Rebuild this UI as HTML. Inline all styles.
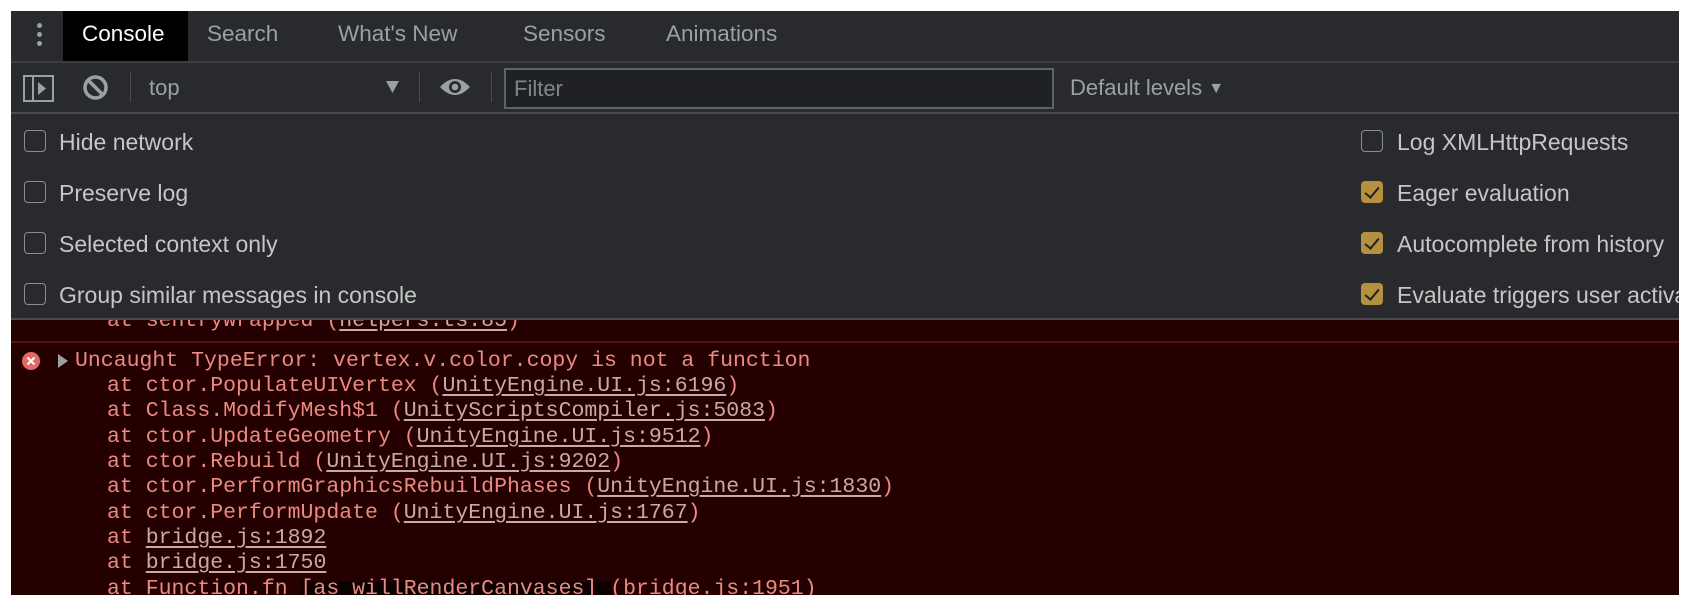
<!DOCTYPE html>
<html><head><meta charset="utf-8"><style>
*{margin:0;padding:0;box-sizing:border-box}
html,body{width:1690px;height:606px;background:#fff;overflow:hidden}
body{position:relative;font-family:"Liberation Sans",Arial,sans-serif}
#p{position:absolute;left:11px;top:11px;width:1668px;height:584px;background:#292a2d;overflow:hidden}
.a{position:absolute;white-space:nowrap}
.tab{position:absolute;top:0;height:50px;line-height:46px;font-size:22.5px;color:#9aa0a6}
.cb{position:absolute;width:22px;height:22px;border:1.5px solid #8a8d91;border-radius:4px}
.cb.on{background:#b5913f;border-color:#b5913f}
.cb.on:after{content:"";position:absolute;left:6px;top:2px;width:6px;height:12px;border:solid #222;border-width:0 2.5px 2.5px 0;transform:rotate(40deg)}
.lbl{position:absolute;font-size:23px;color:#c4c7c5;line-height:24px;white-space:nowrap}
#log{position:absolute;left:0;top:309px;width:1668px;height:275px;background:#250000;font-family:"Liberation Mono",monospace;font-size:21.5px;color:#ec8a82;line-height:25.3px;overflow:hidden}
#log .l{position:absolute;white-space:pre}
#log u{color:#c9a9a6;text-decoration:underline;text-underline-offset:3px}
</style></head><body>
<div id="p">
 <div class="a" style="left:0;top:0;width:1668px;height:52px;background:#292a2d;border-bottom:2px solid #3c3d40"></div>
 <div class="a" style="left:26px;top:12px;width:5px;height:5px;border-radius:50%;background:#9aa0a6"></div>
 <div class="a" style="left:26px;top:21px;width:5px;height:5px;border-radius:50%;background:#9aa0a6"></div>
 <div class="a" style="left:26px;top:30px;width:5px;height:5px;border-radius:50%;background:#9aa0a6"></div>
 <div class="tab" style="left:52px;width:125px;background:#000;color:#fff;padding-left:19px">Console</div>
 <div class="tab" style="left:196px">Search</div>
 <div class="tab" style="left:327px">What's New</div>
 <div class="tab" style="left:512px">Sensors</div>
 <div class="tab" style="left:655px">Animations</div>
 <div class="a" style="left:0;top:101px;width:1668px;height:2px;background:#4a4b4e"></div>
 <svg class="a" style="left:12px;top:64px" width="31" height="27" viewBox="0 0 31 27"><rect x="1" y="1" width="29" height="25" fill="none" stroke="#9aa0a6" stroke-width="2"/><line x1="10" y1="1" x2="10" y2="26" stroke="#9aa0a6" stroke-width="2"/><path d="M15 7 L23 13.5 L15 20Z" fill="#9aa0a6"/></svg>
 <svg class="a" style="left:71px;top:63px" width="27" height="27" viewBox="0 0 27 27"><circle cx="13.5" cy="13.5" r="10.5" fill="none" stroke="#9aa0a6" stroke-width="3.5"/><line x1="6" y1="6" x2="21" y2="21" stroke="#9aa0a6" stroke-width="3.5"/></svg>
 <div class="a" style="left:119px;top:61px;width:1px;height:30px;background:#4a4b4e"></div>
 <div class="a" style="left:138px;top:62px;font-size:22px;color:#9aa0a6;line-height:30px">top</div>
 <svg class="a" style="left:375px;top:70px" width="13" height="12"><path d="M0 0H13L6.5 12Z" fill="#9aa0a6"/></svg>
 <div class="a" style="left:408px;top:61px;width:1px;height:30px;background:#4a4b4e"></div>
 <svg class="a" style="left:428px;top:66px" width="32" height="20" viewBox="0 0 32 20"><path d="M1 10 Q16 -6 31 10 Q16 26 1 10Z" fill="#9aa0a6"/><circle cx="16" cy="10" r="6" fill="#292a2d"/><circle cx="16" cy="10" r="3.3" fill="#9aa0a6"/></svg>
 <div class="a" style="left:480px;top:61px;width:1px;height:30px;background:#4a4b4e"></div>
 <div class="a" style="left:493px;top:57px;width:550px;height:41px;background:#202124;border:2px solid #5f6368"></div>
 <div class="a" style="left:503px;top:63px;font-size:22px;color:#80868b;line-height:30px">Filter</div>
 <div class="a" style="left:1059px;top:62px;font-size:22px;color:#9aa0a6;line-height:30px">Default levels <span style="font-size:16px;position:relative;top:-2px">▼</span></div>
 <div class="cb" style="left:13px;top:119px"></div><div class="lbl" style="left:48px;top:119px">Hide network</div>
 <div class="cb" style="left:13px;top:170px"></div><div class="lbl" style="left:48px;top:170px">Preserve log</div>
 <div class="cb" style="left:13px;top:221px"></div><div class="lbl" style="left:48px;top:221px">Selected context only</div>
 <div class="cb" style="left:13px;top:272px"></div><div class="lbl" style="left:48px;top:272px">Group similar messages in console</div>
 <div class="cb" style="left:1350px;top:119px"></div><div class="lbl" style="left:1386px;top:119px">Log XMLHttpRequests</div>
 <div class="cb on" style="left:1350px;top:170px"></div><div class="lbl" style="left:1386px;top:170px">Eager evaluation</div>
 <div class="cb on" style="left:1350px;top:221px"></div><div class="lbl" style="left:1386px;top:221px">Autocomplete from history</div>
 <div class="cb on" style="left:1350px;top:272px"></div><div class="lbl" style="left:1386px;top:272px">Evaluate triggers user activation</div>
 <div class="a" style="left:0;top:307px;width:1668px;height:2px;background:#4a4b4e"></div>
 <div id="log">
  <div class="l" style="left:96px;top:-11px">at sentryWrapped (<u>helpers.ts:85</u>)</div>
  <div class="a" style="left:0;top:21px;width:1668px;height:2px;background:#5a0f0f"></div>
  <svg class="a" style="left:11px;top:32px" width="18" height="18"><circle cx="9" cy="9" r="9" fill="#e46962"/><path d="M5.5 5.5L12.5 12.5M12.5 5.5L5.5 12.5" stroke="#fff" stroke-width="2"/></svg>
  <svg class="a" style="left:47px;top:34px" width="10" height="14"><path d="M0 0L10 7L0 14Z" fill="#9aa0a6"/></svg>
  <div class="l" style="left:64px;top:29px">Uncaught TypeError: vertex.v.color.copy is not a function</div>
  <div class="l" style="left:96px;top:54px">at ctor.PopulateUIVertex (<u>UnityEngine.UI.js:6196</u>)</div>
  <div class="l" style="left:96px;top:79px">at Class.ModifyMesh$1 (<u>UnityScriptsCompiler.js:5083</u>)</div>
  <div class="l" style="left:96px;top:105px">at ctor.UpdateGeometry (<u>UnityEngine.UI.js:9512</u>)</div>
  <div class="l" style="left:96px;top:130px">at ctor.Rebuild (<u>UnityEngine.UI.js:9202</u>)</div>
  <div class="l" style="left:96px;top:155px">at ctor.PerformGraphicsRebuildPhases (<u>UnityEngine.UI.js:1830</u>)</div>
  <div class="l" style="left:96px;top:181px">at ctor.PerformUpdate (<u>UnityEngine.UI.js:1767</u>)</div>
  <div class="l" style="left:96px;top:206px">at <u>bridge.js:1892</u></div>
  <div class="l" style="left:96px;top:231px">at <u>bridge.js:1750</u></div>
  <div class="a" style="left:290px;top:262px;width:310px;height:20px;background:#0d0000"></div>
  <div class="l" style="left:96px;top:257px">at Function.fn [as willRenderCanvases] (bridge.js:1951)</div>
 </div>
</div>
</body></html>
